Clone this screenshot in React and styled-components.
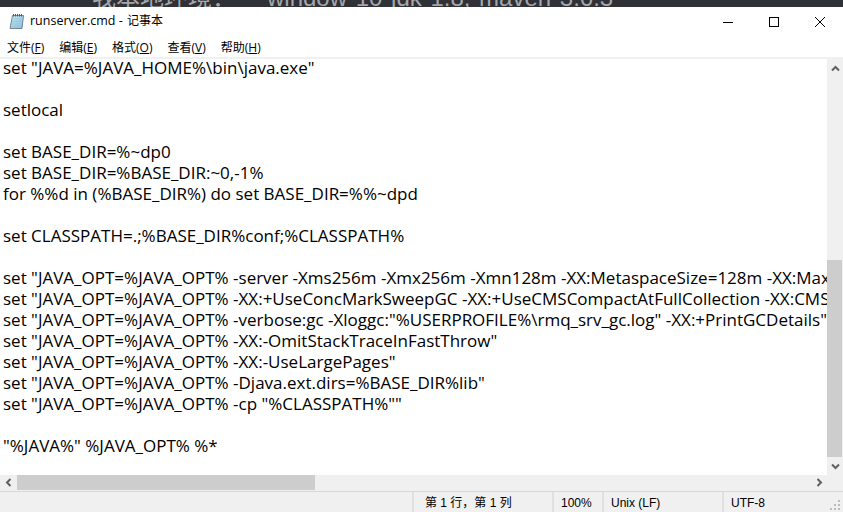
import React from "react";
import styled, { createGlobalStyle } from "styled-components";

const Global = createGlobalStyle`
  html, body { margin: 0; padding: 0; background: #fff; }
  #root { width: 843px; height: 512px; overflow: hidden; }
`;
const UI = `"Open Sans", "Noto Sans CJK SC", sans-serif`;
const Window = styled.div`
  width: 843px; height: 512px; display: flex; flex-direction: column; overflow: hidden;
  background: #fff; color: #000; font-family: "Noto Sans CJK SC", sans-serif;
`;
const Backdrop = styled.div`
  height: 7px; flex: none; background: #2f3136; color: #a4a6ab; overflow: hidden;
  display: flex; gap: 31px; padding-left: 92px; font: 24px/1 "Liberation Sans", "Noto Sans CJK SC", sans-serif;
  word-spacing: 2px; align-items: flex-end;
  span { white-space: pre; display: block; margin-bottom: -3px; }
`;
const TitleBar = styled.div`
  height: 29px; flex: none; display: flex; align-items: center; padding-left: 9px; gap: 5px;
`;
const Title = styled.span`
  flex: 1; font: 12.5px/1 ${UI}; white-space: pre;
`;
const TitleApp = styled.span`
  font-size: 12px; margin-left: 1px;
`;
const Controls = styled.div`
  display: flex; align-self: stretch;
`;
const Control = styled.div`
  width: 46px; display: flex; align-items: center; justify-content: center;
`;
const MenuBar = styled.div`
  height: 19px; flex: none; display: flex; align-items: center; padding: 2px 0 0 7px; gap: 15px;
  font: 12px/1 ${UI};
  u { text-decoration: underline; }
`;
const Rule = styled.div`
  height: 2px; flex: none; background: #f0f0f0;
`;
const Middle = styled.div`
  flex: 1; min-height: 0; display: flex;
`;
const Editor = styled.div`
  flex: 1; min-width: 0; overflow: hidden; background: #fff;
`;
const Code = styled.pre`
  margin: -2px 0 0; padding: 0 0 0 3px;
  font: 17px/21px "Open Sans", sans-serif; color: #000;
`;
const VBar = styled.div`
  width: 16px; flex: none; background: #f0f0f0; display: flex; flex-direction: column;
`;
const Arrow = styled.div`
  flex: none; width: ${p => p.$w || 16}px; height: ${p => p.$h || 18}px;
  display: flex; align-items: center; justify-content: center;
`;
const VTrack = styled.div`
  flex: 1; display: flex; flex-direction: column; justify-content: flex-end;
`;
const VThumb = styled.div`
  width: 15px; height: 197px; background: #cdcdcd;
`;
const HBar = styled.div`
  height: 16px; flex: none; background: #f0f0f0; display: flex;
`;
const HTrack = styled.div`
  flex: 1;
`;
const HThumb = styled.div`
  width: 298px; height: 15px; background: #cdcdcd;
`;
const Status = styled.div`
  height: 21px; box-sizing: border-box; flex: none; background: #f0f0f0; border-top: 1px solid #d7d7d7; display: flex;
  font: 12px/22px "Liberation Sans", "Noto Sans CJK SC", sans-serif; position: relative;
`;
const Spacer = styled.div`
  width: 412px; flex: none;
`;
const Cell = styled.div`
  width: ${p => p.$w}px; flex: none; border-left: 2px solid #e0e0e0; padding-left: ${p => p.$pad}px;
  white-space: pre; box-sizing: border-box;
`;
const Grip = styled.svg`
  position: absolute; right: 2px; bottom: 1px;
`;

const TEXT = `set "JAVA=%JAVA_HOME%\\bin\\java.exe"

setlocal

set BASE_DIR=%~dp0
set BASE_DIR=%BASE_DIR:~0,-1%
for %%d in (%BASE_DIR%) do set BASE_DIR=%%~dpd

set CLASSPATH=.;%BASE_DIR%conf;%CLASSPATH%

set "JAVA_OPT=%JAVA_OPT% -server -Xms256m -Xmx256m -Xmn128m -XX:MetaspaceSize=128m -XX:MaxMetaspaceSize=320m"
set "JAVA_OPT=%JAVA_OPT% -XX:+UseConcMarkSweepGC -XX:+UseCMSCompactAtFullCollection -XX:CMSInitiatingOccupancyFraction=70"
set "JAVA_OPT=%JAVA_OPT% -verbose:gc -Xloggc:"%USERPROFILE%\\rmq_srv_gc.log" -XX:+PrintGCDetails"
set "JAVA_OPT=%JAVA_OPT% -XX:-OmitStackTraceInFastThrow"
set "JAVA_OPT=%JAVA_OPT% -XX:-UseLargePages"
set "JAVA_OPT=%JAVA_OPT% -Djava.ext.dirs=%BASE_DIR%lib"
set "JAVA_OPT=%JAVA_OPT% -cp "%CLASSPATH%""

"%JAVA%" %JAVA_OPT% %*`;

const Chevron = ({ dir }) => {
  const rot = { up: 0, down: 180, left: 270, right: 90 }[dir];
  return (
    <svg width="9" height="7" viewBox="0 0 9 7" style={{ transform: `rotate(${rot}deg)` }}>
      <path d="M1 5.5 L4.5 2 L8 5.5" fill="none" stroke="#606060" strokeWidth="2" />
    </svg>
  );
};

const NotepadIcon = () => (
  <svg width="16" height="17" viewBox="0 0 16 17">
    <defs>
      <linearGradient id="pad" x1="0" y1="0" x2="1" y2="1">
        <stop offset="0" stopColor="#cfe9f5" />
        <stop offset="1" stopColor="#7fc0df" />
      </linearGradient>
    </defs>
    <path d="M3.5 2.5 L14.5 2.5 L13 15.5 L1 15.5 Z" fill="url(#pad)" stroke="#6f8696" />
    <path d="M3.5 6h9.5M3.2 8.5h9.5M3 11h9.3M2.7 13.5h9.3" stroke="#9cc5da" />
    <path d="M4.5 1v2.5M6.5 1v2.5M8.5 1v2.5M10.5 1v2.5M12.5 1v2.5" stroke="#4d5963" />
  </svg>
);

export default function App() {
  return (
    <>
      <Global />
      <Window>
        <Backdrop><span>我本地环境：</span><span>window 10 jdk 1.8, maven 3.6.3</span></Backdrop>
        <TitleBar>
          <NotepadIcon />
          <Title>runserver.cmd - <TitleApp>记事本</TitleApp></Title>
          <Controls>
            <Control>
              <svg width="10" height="10" viewBox="0 0 10 10"><path d="M0 5.5h10" stroke="#000" /></svg>
            </Control>
            <Control>
              <svg width="10" height="10" viewBox="0 0 10 10"><rect x="0.5" y="0.5" width="9" height="9" fill="none" stroke="#000" /></svg>
            </Control>
            <Control>
              <svg width="10" height="10" viewBox="0 0 10 10"><path d="M0 0L10 10M10 0L0 10" stroke="#000" /></svg>
            </Control>
          </Controls>
        </TitleBar>
        <MenuBar>
          <span>文件(<u>F</u>)</span>
          <span>编辑(<u>E</u>)</span>
          <span>格式(<u>O</u>)</span>
          <span>查看(<u>V</u>)</span>
          <span>帮助(<u>H</u>)</span>
        </MenuBar>
        <Rule />
        <Middle>
          <Editor><Code>{TEXT}</Code></Editor>
          <VBar>
            <Arrow><Chevron dir="up" /></Arrow>
            <VTrack><VThumb /></VTrack>
            <Arrow><Chevron dir="down" /></Arrow>
          </VBar>
        </Middle>
        <HBar>
          <Arrow $w={17} $h={15}><Chevron dir="left" /></Arrow>
          <HTrack><HThumb /></HTrack>
          <Arrow $h={15}><Chevron dir="right" /></Arrow>
          <Arrow $h={15} />
        </HBar>
        <Status>
          <Spacer />
          <Cell $w={140} $pad={11}>第 1 行，第 1 列</Cell>
          <Cell $w={50} $pad={7}>100%</Cell>
          <Cell $w={120} $pad={7}>Unix (LF)</Cell>
          <Cell $w={121} $pad={7}>UTF-8</Cell>
          <Grip width="12" height="12" viewBox="0 0 12 12">
            <path d="M9 1h2v2H9zM5 5h2v2H5zM9 5h2v2H9zM1 9h2v2H1zM5 9h2v2H5zM9 9h2v2H9z" fill="#bdbdbd" />
          </Grip>
        </Status>
      </Window>
    </>
  );
}
